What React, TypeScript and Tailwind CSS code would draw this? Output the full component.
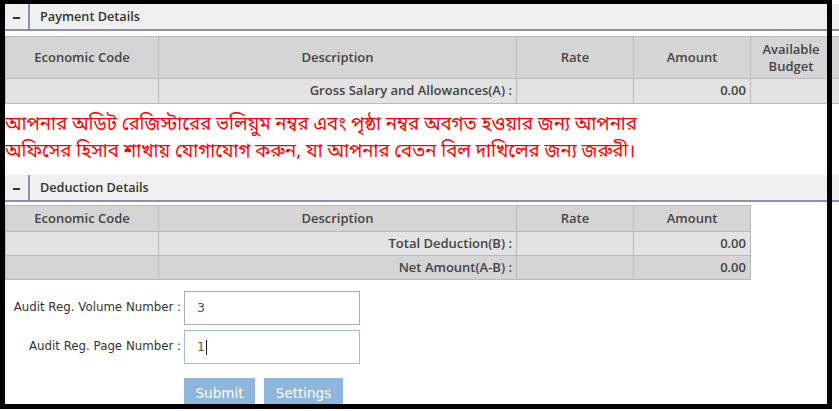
import React from "react";

const tableFont = { fontFamily: '"Open Sans", "Noto Sans", sans-serif' };

function SectionHeader({ title }: { title: string }) {
  return (
    <div className="flex h-[27px] w-full items-stretch border-b-2 border-[#8890b0] bg-[#f0f0f0]">
      <div className="flex w-[25px] items-center justify-center border-r-2 border-[#8890b0]">
        <div className="mt-[2px] h-[2px] w-[7px] bg-[#333]" />
      </div>
      <div
        className="flex items-center pl-[10px] text-[12.7px] font-semibold text-[#333]"
        style={tableFont}
      >
        {title}
      </div>
    </div>
  );
}

const cell = "border border-[#b9b9b9] px-[4px]";

export default function App() {
  return (
    <div className="relative h-[411px] w-[839px] overflow-hidden bg-white">
      <div className="flex flex-col pl-[5px] pt-[4px]">
        <SectionHeader title="Payment Details" />
        <table
          className="mt-[5px] w-[862px] table-fixed border-collapse text-[13px] font-semibold text-[#444]"
          style={tableFont}
        >
          <colgroup>
            <col className="w-[153px]" />
            <col className="w-[358px]" />
            <col className="w-[117px]" />
            <col className="w-[117px]" />
            <col className="w-[117px]" />
          </colgroup>
          <tbody>
            <tr className="h-[42px] bg-[#d5d5d5] text-center">
              <td className={cell}>Economic Code</td>
              <td className={cell}>Description</td>
              <td className={cell}>Rate</td>
              <td className={cell}>Amount</td>
              <td className={`${cell} pr-[40px] leading-[17px]`}>
                Available
                <br />
                Budget
              </td>
            </tr>
            <tr className="h-[25px] bg-[#e3e3e3] text-right">
              <td className={cell}></td>
              <td className={cell}>Gross Salary and Allowances(A) :</td>
              <td className={cell}></td>
              <td className={cell}>0.00</td>
              <td className={cell}></td>
            </tr>
          </tbody>
        </table>

        <div
          className="mt-[8px] h-[59px] text-[18.6px] leading-[27px] text-[#ff0000]"
          style={{ fontFamily: '"Noto Sans Bengali", "Lohit Bengali", "Noto Sans", sans-serif' }}
        >
          আপনার অডিট রেজিস্টারের ভলিয়ুম নম্বর এবং পৃষ্ঠা নম্বর অবগত হওয়ার জন্য আপনার
          <br />
          অফিসের হিসাব শাখায় যোগাযোগ করুন, যা আপনার বেতন বিল দাখিলের জন্য জরুরী।
        </div>

        <div className="mt-[4px]">
          <SectionHeader title="Deduction Details" />
        </div>
        <table
          className="mt-[3px] w-[745px] table-fixed border-collapse text-[13px] font-semibold text-[#444]"
          style={tableFont}
        >
          <colgroup>
            <col className="w-[153px]" />
            <col className="w-[358px]" />
            <col className="w-[117px]" />
            <col className="w-[117px]" />
          </colgroup>
          <tbody>
            <tr className="h-[26px] bg-[#d5d5d5] text-center">
              <td className={cell}>Economic Code</td>
              <td className={cell}>Description</td>
              <td className={cell}>Rate</td>
              <td className={cell}>Amount</td>
            </tr>
            <tr className="h-[24px] bg-[#e3e3e3] text-right">
              <td className={cell}></td>
              <td className={cell}>Total Deduction(B) :</td>
              <td className={cell}></td>
              <td className={cell}>0.00</td>
            </tr>
            <tr className="h-[24px] bg-[#d5d5d5] text-right">
              <td className={cell}></td>
              <td className={cell}>Net Amount(A-B) :</td>
              <td className={cell}></td>
              <td className={cell}>0.00</td>
            </tr>
          </tbody>
        </table>

        <div
          className="mt-[11px] flex flex-col gap-[5px] text-[12px] text-[#333]"
          style={{ fontFamily: '"DejaVu Sans", Verdana, sans-serif' }}
        >
          <div className="flex items-center">
            <div className="w-[179px] pr-[3px] text-right text-[11.8px]">Audit Reg. Volume Number :</div>
            <div className="flex h-[34px] w-[176px] items-center border border-[#adadad] pl-[12px] text-[12.5px] text-[#555]">
              3
            </div>
          </div>
          <div className="flex items-center">
            <div className="w-[179px] pr-[3px] text-right text-[11.8px]">Audit Reg. Page Number :</div>
            <div className="flex h-[34px] w-[176px] items-center border border-[#9fbbea] pl-[12px] text-[12.5px] text-[#555]">
              1<span className="ml-[1px] inline-block h-[15px] w-px bg-[#222]" />
            </div>
          </div>
          <div className="mt-[9px] flex gap-[9px] pl-[179px]">
            <div className="flex h-[30px] w-[71px] items-center justify-center bg-[#8fb6dd] text-[13.5px] text-white">
              Submit
            </div>
            <div className="flex h-[30px] w-[79px] items-center justify-center bg-[#8fb6dd] text-[13.5px] text-white">
              Settings
            </div>
          </div>
        </div>
      </div>

      {/* window frame overlay */}
      <div className="absolute left-0 top-0 h-[4px] w-[832px] bg-black" />
      <div className="absolute left-0 top-0 h-[409px] w-[5px] bg-black" />
      <div className="absolute left-[827px] top-0 h-[409px] w-[5px] bg-black" />
      <div className="absolute left-0 top-[404px] h-[5px] w-[832px] bg-black" />
    </div>
  );
}
